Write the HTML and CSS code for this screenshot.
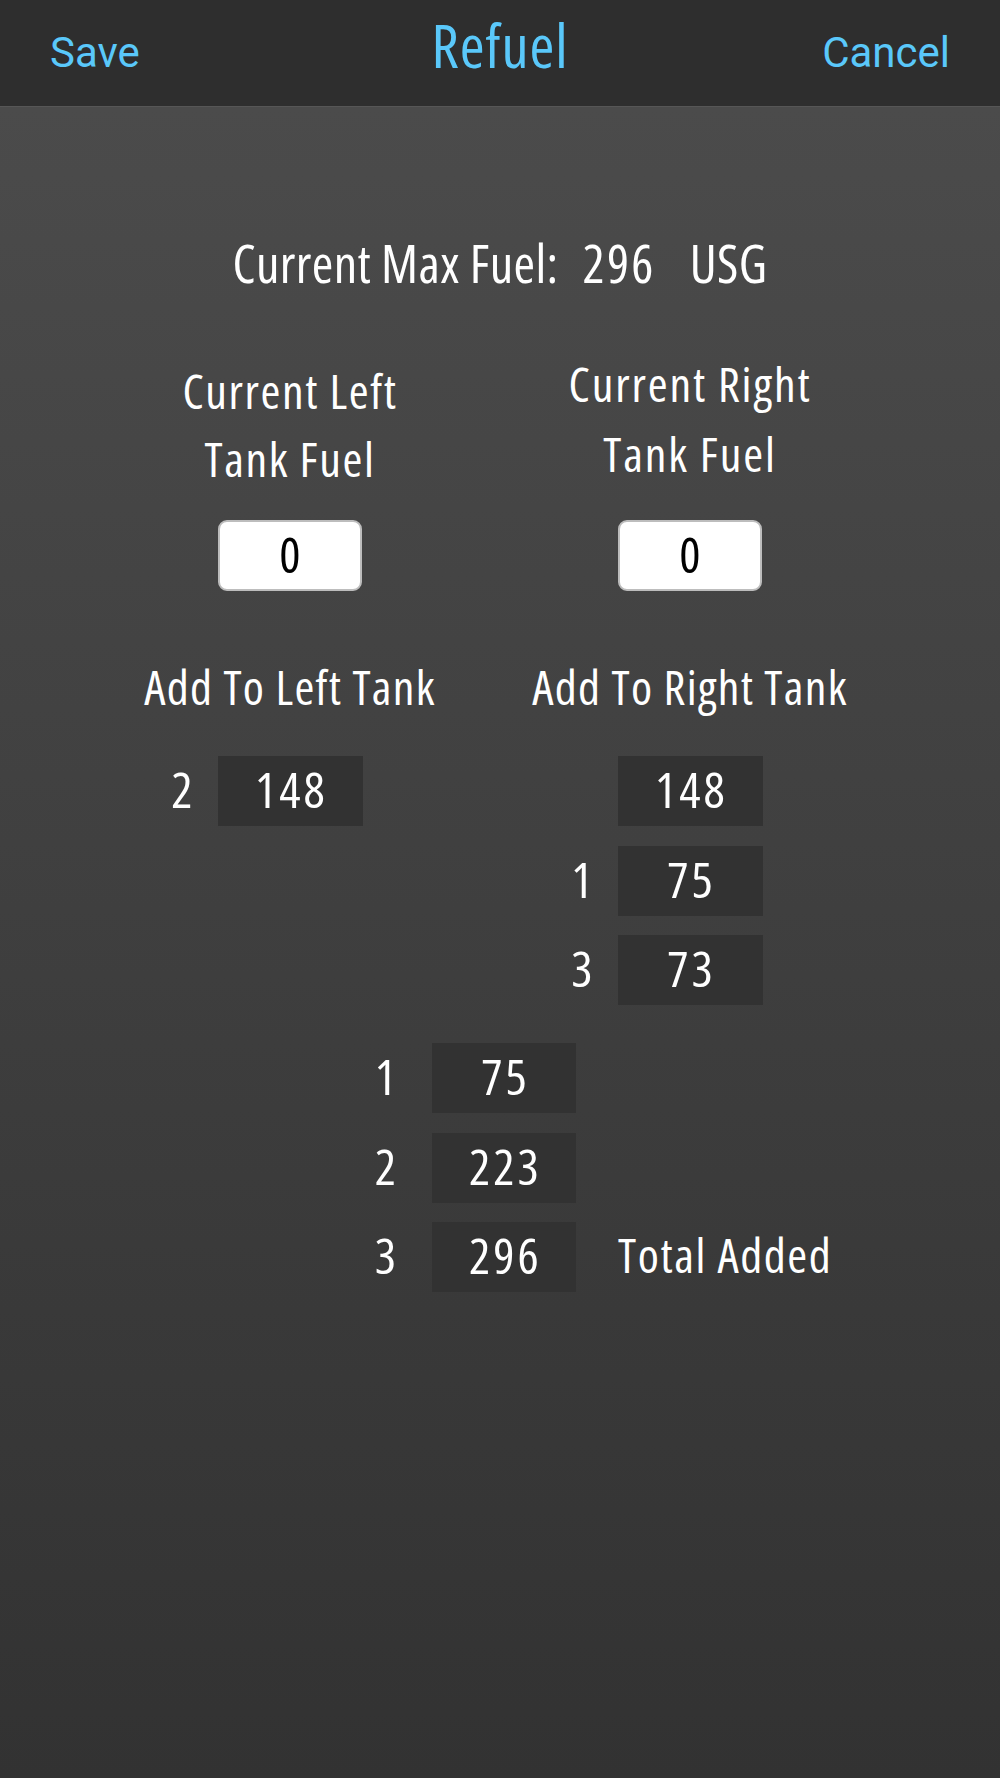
FILE: index.html
```html
<!DOCTYPE html>
<html lang="en">
<head>
<meta charset="utf-8">
<title>Refuel</title>
<link rel="stylesheet" href="styles.css">
</head>
<body>
<div class="screen">
  <header class="navbar">
    <a class="nav-btn nav-save">Save</a>
    <h1 class="nav-title">Refuel</h1>
    <a class="nav-btn nav-cancel">Cancel</a>
  </header>

  <main class="content">
    <div class="maxfuel">
      <span>Current Max Fuel:</span><span class="mf-num">296</span><span class="mf-unit">USG</span>
    </div>

    <section class="tanks">
      <div class="tank">
        <div class="tank-title">Current Left<br>Tank Fuel</div>
        <div class="input-box">0</div>
      </div>
      <div class="tank">
        <div class="tank-title tank-title-high">Current Right<br>Tank Fuel</div>
        <div class="input-box">0</div>
      </div>
    </section>

    <section class="tanks adds">
      <div class="tank">
        <div class="add-title">Add To Left Tank</div>
        <div class="rows">
          <div class="row"><span class="row-label">2</span><span class="num-box">148</span></div>
        </div>
      </div>
      <div class="tank">
        <div class="add-title">Add To Right Tank</div>
        <div class="rows">
          <div class="row"><span class="row-label"></span><span class="num-box">148</span></div>
          <div class="row"><span class="row-label">1</span><span class="num-box">75</span></div>
          <div class="row"><span class="row-label">3</span><span class="num-box">73</span></div>
        </div>
      </div>
    </section>

    <section class="totals">
      <div class="row total-row"><span class="row-label">1</span><span class="num-box">75</span><span class="row-note"></span></div>
      <div class="row total-row"><span class="row-label">2</span><span class="num-box">223</span><span class="row-note"></span></div>
      <div class="row total-row"><span class="row-label">3</span><span class="num-box">296</span><span class="row-note">Total Added</span></div>
    </section>
  </main>
</div>
</body>
</html>
```

FILE: styles.css
```css
* { box-sizing: border-box; }

html, body {
  margin: 0;
  padding: 0;
}

body {
  width: 1000px;
  height: 1778px;
  overflow: hidden;
  background: #323232;
  font-family: "Open Sans", "DejaVu Sans Condensed", sans-serif;
  font-stretch: 75%;
  color: #ffffff;
}

.screen {
  width: 1000px;
  height: 1778px;
  display: flex;
  flex-direction: column;
}

/* ---------- nav bar ---------- */
.navbar {
  height: 107px;
  flex: 0 0 auto;
  background: #2e2e2e;
  border-bottom: 1px solid #565656;
  display: flex;
  align-items: flex-start;
  justify-content: space-between;
  padding: 0 50px 0 50px;
}

.nav-btn {
  font-family: Roboto, "Liberation Sans", sans-serif;
  font-stretch: normal;
  font-size: 42px;
  line-height: 106px;
  color: #5ac8fa;
  width: 130px;
}

.nav-cancel { text-align: right; }

.nav-title {
  margin: 0;
  font-weight: normal;
  font-size: 60px;
  letter-spacing: 1px;
  line-height: 90px;
  color: #5ac8fa;
}

/* ---------- content ---------- */
.content {
  flex: 1 1 auto;
  background: linear-gradient(#4b4b4b, #323232);
  display: flex;
  flex-direction: column;
}

.maxfuel {
  margin-top: 116px;
  height: 80px;
  font-size: 52px;
  letter-spacing: 0.4px;
  line-height: 80px;
  text-align: center;
  white-space: nowrap;
}

.mf-num { margin-left: 24px; letter-spacing: 2.3px; }
.mf-unit { margin-left: 34px; }

.tanks {
  display: grid;
  grid-template-columns: 400px 400px;
  padding-left: 90px;
  margin-top: 49px;
}

.tank {
  display: flex;
  flex-direction: column;
  align-items: center;
}

.tank-title {
  height: 168px;
  padding-top: 5px;
  font-size: 48px;
  letter-spacing: 1.6px;
  line-height: 68px;
  text-align: center;
  white-space: nowrap;
}

.tank-title-high { padding-top: 0; line-height: 70px; margin-top: -3px; height: 171px; letter-spacing: 1.9px; }

.input-box {
  width: 144px;
  height: 71px;
  background: #ffffff;
  border: 2px solid #bdbdbd;
  border-radius: 9px;
  color: #000000;
  font-size: 50px;
  line-height: 64px;
  text-align: center;
}

.adds { margin-top: 62px; align-items: start; }

.add-title {
  font-size: 48px;
  letter-spacing: 1.3px;
  line-height: 68px;
  white-space: nowrap;
  text-align: center;
}

.rows {
  margin-top: 35px;
  width: 100%;
  display: flex;
  flex-direction: column;
  gap: 19.5px;
}

.row {
  display: grid;
  grid-template-columns: 1fr 145px 1fr;
  height: 70px;
  font-size: 50px;
  line-height: 66px;
}

.row-label {
  text-align: right;
  padding-right: 25px;
}

.num-box {
  background: #323232;
  text-align: center;
  letter-spacing: 3px;
  padding-left: 3px;
}

.totals {
  margin-top: 38px;
  display: flex;
  flex-direction: column;
  gap: 19.5px;
  padding-left: 8px;
}

.total-row { grid-template-columns: 1fr 144px 1fr; }

.total-row .row-label { padding-right: 36px; }

.row-note {
  padding-left: 42px;
  font-size: 48px;
  letter-spacing: 1.6px;
  white-space: nowrap;
}
```
